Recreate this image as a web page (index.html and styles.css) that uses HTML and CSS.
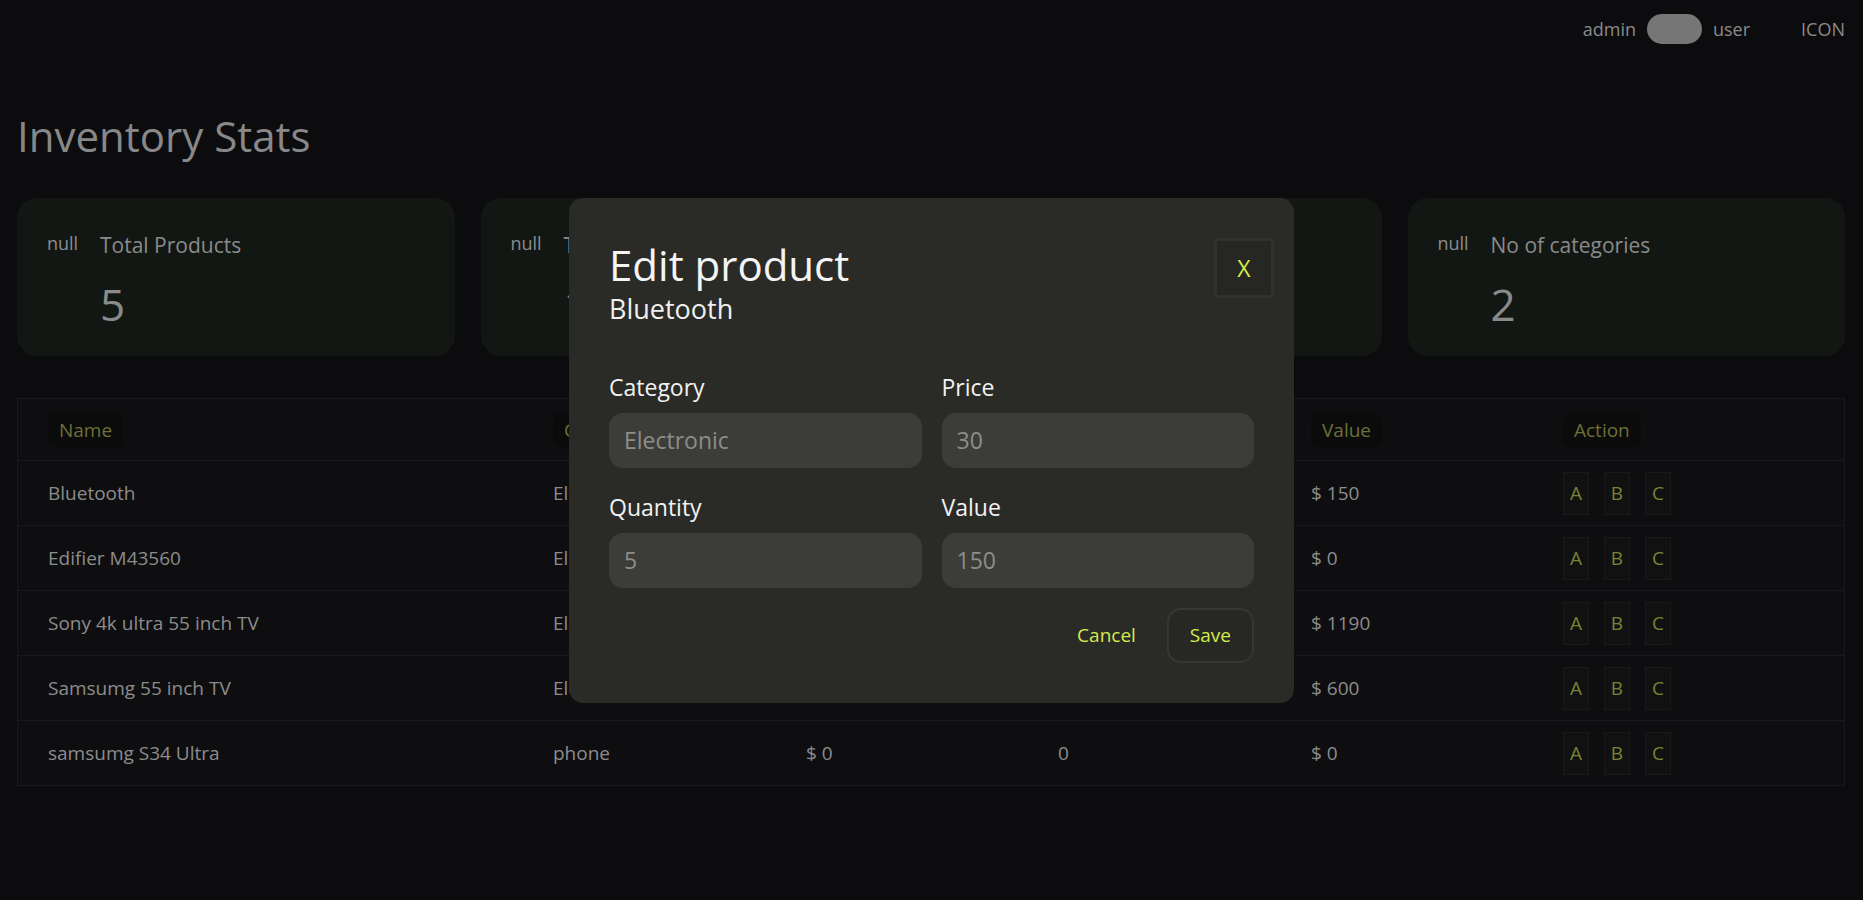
FILE: index.html
```html
<!DOCTYPE html>
<html lang="en">
<head>
<meta charset="utf-8">
<title>Inventory Stats</title>
<link rel="stylesheet" href="styles.css">
</head>
<body>
<header class="topbar">
  <span class="role">admin</span>
  <span class="toggle"></span>
  <span class="role">user</span>
  <span class="icon-label">ICON</span>
</header>
<main class="page">
  <h1 class="page-title">Inventory Stats</h1>
  <section class="stats">
    <div class="stat-card">
      <span class="stat-icon">null</span>
      <div class="stat-body">
        <div class="stat-label">Total Products</div>
        <div class="stat-value">5</div>
      </div>
    </div>
    <div class="stat-card">
      <span class="stat-icon">null</span>
      <div class="stat-body">
        <div class="stat-label">Total store value</div>
        <div class="stat-value">1940</div>
      </div>
    </div>
    <div class="stat-card">
      <span class="stat-icon">null</span>
      <div class="stat-body">
        <div class="stat-label">Out of stocks</div>
        <div class="stat-value">2</div>
      </div>
    </div>
    <div class="stat-card">
      <span class="stat-icon">null</span>
      <div class="stat-body">
        <div class="stat-label">No of categories</div>
        <div class="stat-value">2</div>
      </div>
    </div>
  </section>
  <section class="table">
    <div class="row head">
      <div class="cell"><span class="th">Name</span></div>
      <div class="cell"><span class="th">Category</span></div>
      <div class="cell"><span class="th">Price</span></div>
      <div class="cell"><span class="th">Quantity</span></div>
      <div class="cell"><span class="th">Value</span></div>
      <div class="cell"><span class="th">Action</span></div>
    </div>
    <div class="row">
      <div class="cell">Bluetooth</div>
      <div class="cell">Electronic</div>
      <div class="cell">$ 30</div>
      <div class="cell">5</div>
      <div class="cell">$ 150</div>
      <div class="cell actions"><span class="act">A</span><span class="act">B</span><span class="act">C</span></div>
    </div>
    <div class="row">
      <div class="cell">Edifier M43560</div>
      <div class="cell">Electronic</div>
      <div class="cell">$ 40</div>
      <div class="cell">0</div>
      <div class="cell">$ 0</div>
      <div class="cell actions"><span class="act">A</span><span class="act">B</span><span class="act">C</span></div>
    </div>
    <div class="row">
      <div class="cell">Sony 4k ultra 55 inch TV</div>
      <div class="cell">Electronic</div>
      <div class="cell">$ 170</div>
      <div class="cell">7</div>
      <div class="cell">$ 1190</div>
      <div class="cell actions"><span class="act">A</span><span class="act">B</span><span class="act">C</span></div>
    </div>
    <div class="row">
      <div class="cell">Samsumg 55 inch TV</div>
      <div class="cell">Electronic</div>
      <div class="cell">$ 300</div>
      <div class="cell">2</div>
      <div class="cell">$ 600</div>
      <div class="cell actions"><span class="act">A</span><span class="act">B</span><span class="act">C</span></div>
    </div>
    <div class="row">
      <div class="cell">samsumg S34 Ultra</div>
      <div class="cell">phone</div>
      <div class="cell">$ 0</div>
      <div class="cell">0</div>
      <div class="cell">$ 0</div>
      <div class="cell actions"><span class="act">A</span><span class="act">B</span><span class="act">C</span></div>
    </div>
  </section>
</main>

<div class="backdrop">
  <div class="modal">
    <div class="modal-head">
      <div class="modal-titles">
        <h2 class="modal-title">Edit product</h2>
        <div class="modal-sub">Bluetooth</div>
      </div>
      <button class="close-btn">X</button>
    </div>
    <div class="form-grid">
      <label class="field">
        <span class="field-label">Category</span>
        <input class="field-input" placeholder="Electronic">
      </label>
      <label class="field">
        <span class="field-label">Price</span>
        <input class="field-input" placeholder="30">
      </label>
      <label class="field">
        <span class="field-label">Quantity</span>
        <input class="field-input" placeholder="5">
      </label>
      <label class="field">
        <span class="field-label">Value</span>
        <input class="field-input" placeholder="150">
      </label>
    </div>
    <div class="modal-actions">
      <button class="btn btn-plain">Cancel</button>
      <button class="btn btn-outline">Save</button>
    </div>
  </div>
</div>
</body>
</html>
```
FILE: styles.css
```css
* { box-sizing: border-box; }

html, body {
  margin: 0;
  padding: 0;
  background: #0c0c0e;
  font-family: "Open Sans", "Noto Sans", sans-serif;
  color: #8c8c8c;
}

.topbar {
  height: 58px;
  display: flex;
  align-items: center;
  justify-content: flex-end;
  padding-right: 18px;
  font-size: 18px;
}

.role { color: #8a8a8a; }

.toggle {
  width: 55px;
  height: 30px;
  border-radius: 15px;
  background: #767676;
  margin: 0 11px;
}

.icon-label {
  margin-left: 51px;
  color: #8a8a8a;
}

.page {
  padding: 0 18px 40px 17px;
}

.page-title {
  margin: 53px 0 37px;
  font-size: 42px;
  line-height: 50px;
  font-weight: 400;
  color: #888888;
}

.stats {
  display: grid;
  grid-template-columns: repeat(4, 1fr);
  gap: 26px;
}

.stat-card {
  height: 158px;
  background: #131713;
  border-radius: 20px;
  padding: 34px 30px 0;
  display: flex;
  align-items: flex-start;
}

.stat-icon {
  font-size: 18px;
  line-height: 20px;
  margin-top: 1px;
  width: 32px;
  margin-right: 21px;
  color: #8c8c8c;
}

.stat-label {
  font-size: 21px;
  line-height: 27px;
  color: #8a8a8a;
}

.stat-value {
  margin-top: 19px;
  font-size: 44px;
  line-height: 53px;
  color: #8a8a8a;
}

.table {
  margin-top: 42px;
  border: 1px solid #19191b;
  background: #0e0e10;
}

.row {
  display: grid;
  grid-template-columns: 505px 253px 252px 253px 252px 1fr;
  height: 65px;
  align-items: center;
  border-bottom: 1px solid #19191b;
  font-size: 19px;
  color: #8c8c8c;
}

.row:last-child { border-bottom: none; height: 64px; }

.row.head { height: 62px; }

.cell {
  padding-left: 30px;
  white-space: nowrap;
}

.th {
  display: inline-block;
  background: #0b0b0c;
  border-radius: 8px;
  padding: 0 11px;
  height: 34px;
  line-height: 34px;
  color: #6c7134;
}

.actions {
  display: flex;
  gap: 15px;
}

.act {
  width: 26px;
  height: 43px;
  line-height: 41px;
  text-align: center;
  border: 1px solid #1a1b19;
  background: #101110;
  color: #7a8236;
  font-size: 19px;
}

/* modal */
.backdrop {
  position: fixed;
  inset: 0;
  display: flex;
  align-items: center;
  justify-content: center;
}

.modal {
  width: 725px;
  background: #2a2b27;
  border-radius: 14px;
  padding: 40px;
  color: #f2f2f2;
}

.modal-head {
  display: flex;
  justify-content: space-between;
  align-items: flex-start;
}

.modal-title {
  margin: 2px 0 0;
  font-size: 42px;
  line-height: 50px;
  font-weight: 400;
  color: #f4f4f4;
}

.modal-sub {
  margin-top: 2px;
  font-size: 27px;
  line-height: 34px;
  color: #f0f0f0;
}

.close-btn {
  width: 60px;
  height: 60px;
  margin-right: -20px;
  background: #262622;
  border: 3px solid #31322e;
  border-radius: 2px;
  color: #d6eb47;
  font-family: "Open Sans", sans-serif;
  font-size: 23px;
  padding: 0;
}

.form-grid {
  margin-top: 46px;
  display: grid;
  grid-template-columns: minmax(0, 1fr) minmax(0, 1fr);
  column-gap: 20px;
  row-gap: 24px;
}

.field {
  display: flex;
  flex-direction: column;
  gap: 11px;
  min-width: 0;
}

.field-label {
  font-size: 23px;
  line-height: 30px;
  color: #f2f2f2;
}

.field-input {
  width: 100%;
  min-width: 0;
  height: 55px;
  border: none;
  outline: none;
  background: #3c3d39;
  border-radius: 14px;
  padding: 0 15px;
  font-family: "Open Sans", sans-serif;
  font-size: 23px;
  color: #8d8d89;
}

.field-input::placeholder { color: #8d8d89; }

.modal-actions {
  margin-top: 20px;
  display: flex;
  justify-content: flex-end;
  gap: 8px;
}

.btn {
  height: 55px;
  padding: 0 21px;
  border-radius: 14px;
  font-family: "Open Sans", sans-serif;
  font-size: 19px;
  color: #d6ea4c;
  background: transparent;
}

.btn-plain { border: 2px solid transparent; }

.btn-outline {
  border: 2px solid #363732;
  background: #272824;
}
```
